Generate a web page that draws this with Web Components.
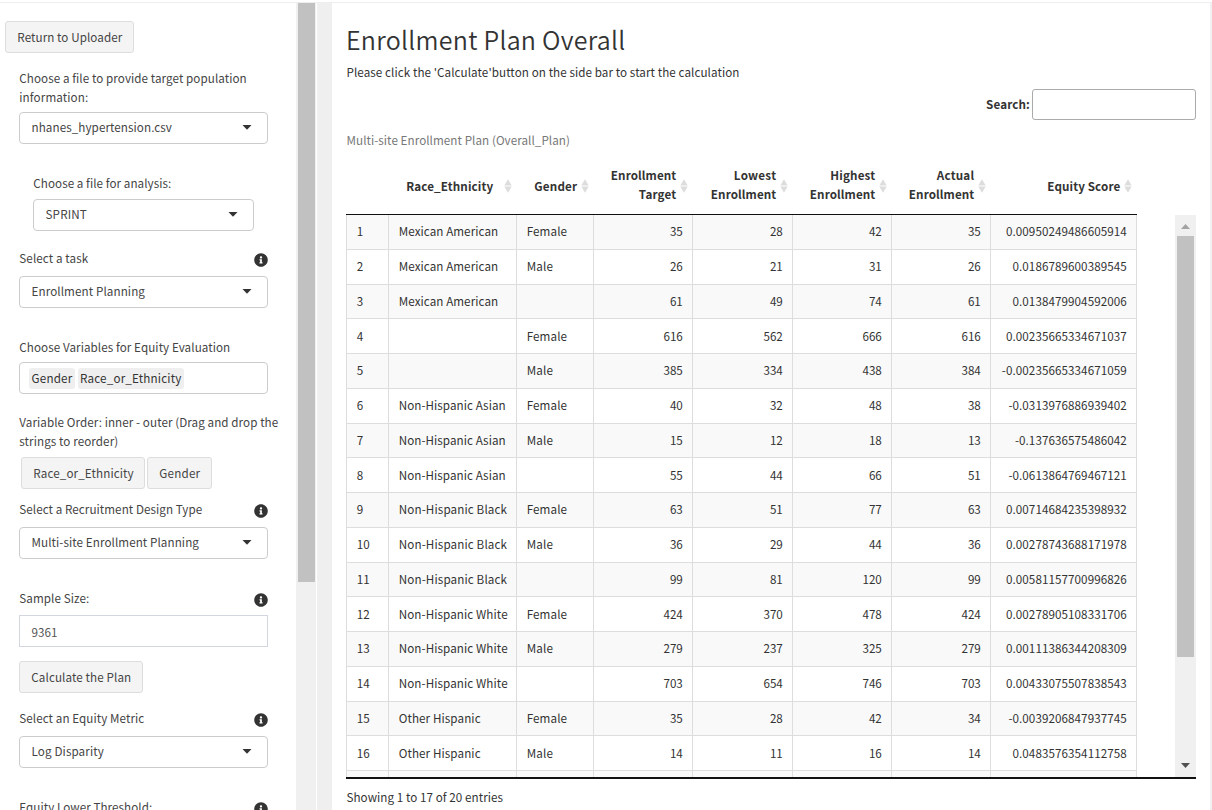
<!DOCTYPE html>
<html lang="en">
<head>
<meta charset="utf-8">
<title>Enrollment Plan</title>
<style>
html,body{margin:0;height:100%;overflow:hidden;background:#fff}
body{font-family:"Noto Sans CJK SC","Open Sans",sans-serif;font-size:11.65px;line-height:19px;color:#333}
</style>
</head>
<body>
<plan-app></plan-app>
<script>
const define = (name, html, setup) => {
  const t = document.createElement('template');
  t.innerHTML = html;
  customElements.define(name, class extends HTMLElement {
    connectedCallback() {
      if (this.shadowRoot) return;
      this.attachShadow({mode: 'open'}).appendChild(t.content.cloneNode(true));
      if (setup) setup(this, this.shadowRoot);
    }
  });
};

// A line of text tracked to occupy the advance width given in "w".
define('tracked-text', `<style>:host{display:inline-block;white-space:pre}</style><slot></slot>`, el => {
  const w = parseFloat(el.getAttribute('w'));
  if (!w) return;
  const natural = el.getBoundingClientRect().width;
  el.style.letterSpacing = ((w - natural) / el.textContent.length) + 'px';
});

define('info-icon', `<style>:host{display:block;width:14px;height:14px}svg{display:block}</style>
<svg width="14" height="14" viewBox="0 0 512 512" fill="#333"><path d="M256 8C119.043 8 8 119.083 8 256c0 136.997 111.043 248 248 248s248-111.003 248-248C504 119.083 392.957 8 256 8zm0 110c23.196 0 42 18.804 42 42s-18.804 42-42 42-42-18.804-42-42 18.804-42 42-42zm56 254c0 6.627-5.373 12-12 12h-88c-6.627 0-12-5.373-12-12v-24c0-6.627 5.373-12 12-12h12v-64h-12c-6.627 0-12-5.373-12-12v-24c0-6.627 5.373-12 12-12h64c6.627 0 12 5.373 12 12v100h12c6.627 0 12 5.373 12 12v24z"/></svg>`);

define('field-label', `<style>:host{display:flex;justify-content:space-between;width:248.500px;height:19px;color:#444;white-space:nowrap}
:host([lines="2"]){height:38px}
.t{display:flex;flex-direction:column;align-items:flex-start;margin-top:-1px;padding-left:.3px}
info-icon{display:none;margin-top:3.700px}:host([info]) info-icon{display:block}</style>
<div class="t"><slot></slot></div><info-icon></info-icon>`);

define('select-box', `<style>:host{display:flex;align-items:center;justify-content:space-between;box-sizing:border-box;width:249px;height:32px;border:1px solid #ccc;border-radius:4px;padding:0 15.500px 1px 11.500px;background:#fff;color:#444}
svg{display:block}::slotted(*){margin-top:-2px}</style><slot></slot><svg width="10" height="5" viewBox="0 0 10 5"><path d="M.5 0h9L5 4.8z" fill="#333"/></svg>`);

define('tag-box', `<style>:host{display:flex;align-items:center;box-sizing:border-box;width:249px;height:32px;border:1px solid #ccc;border-radius:4px;padding:0 9px;color:#333}
div{display:flex;gap:3px}</style><div><slot></slot></div>`);

define('tag-item', `<style>:host{display:block;background:#efefef;border-radius:3px;padding:0 2px 0 2.500px;height:21px;line-height:19px}</style><slot></slot>`);

define('push-button', `<style>:host{display:flex;align-items:center;box-sizing:border-box;width:max-content;height:32px;border:1px solid #ddd;border-radius:3px;background:#f4f4f4;color:#444;padding:0 11px 2px 11.300px}</style><slot></slot>`);

define('number-box', `<style>:host{display:flex;align-items:center;box-sizing:border-box;width:249px;height:32px;border:1px solid #d2d6de;padding:1px 11px 0 11.500px;color:#555}</style><slot></slot>`);

define('side-scroll', `<style>:host{display:block;box-sizing:border-box;width:20px;height:100%;background:#f0f0f0;padding:0 1px 0 2px}
i{display:block;height:579px;background:#c1c1c1}</style><i></i>`);

define('side-bar', `<style>:host{display:flex;width:316px;height:807px;overflow:hidden}
.c{flex:1;min-width:0;display:flex;flex-direction:column;padding:18px 0 0 5px;box-sizing:border-box;overflow:hidden}
.c>*{flex:none}
.g{padding-left:14px}
.r{display:flex;gap:2px;margin:6px 0 0 2px}
</style>
<div class="c">
<push-button style="width:129px"><tracked-text w="105">Return to Uploader</tracked-text></push-button>
<div class="g">
<field-label lines="2" style="margin-top:16px"><tracked-text w="227.5">Choose a file to provide target population</tracked-text><tracked-text w="69">information:</tracked-text></field-label>
<select-box style="margin-top:5px"><tracked-text w="140.5">nhanes_hypertension.csv</tracked-text></select-box>
<field-label style="margin:30px 0 0 14px"><tracked-text w="138">Choose a file for analysis:</tracked-text></field-label>
<select-box style="margin:6px 0 0 14px;width:221px"><tracked-text w="41.5">SPRINT</tracked-text></select-box>
<field-label info style="margin-top:18px"><tracked-text w="69">Select a task</tracked-text></field-label>
<select-box style="margin-top:8px"><tracked-text w="113.5">Enrollment Planning</tracked-text></select-box>
<field-label style="margin-top:30px"><tracked-text w="211">Choose Variables for Equity Evaluation</tracked-text></field-label>
<tag-box style="margin-top:5px"><tag-item><tracked-text w="41">Gender</tracked-text></tag-item><tag-item><tracked-text w="101.5">Race_or_Ethnicity</tracked-text></tag-item></tag-box>
<field-label lines="2" style="margin-top:19px"><tracked-text w="259">Variable Order: inner - outer (Drag and drop the</tracked-text><tracked-text w="99">strings to reorder)</tracked-text></field-label>
<div class="r"><push-button style="width:124px"><tracked-text w="100.5">Race_or_Ethnicity</tracked-text></push-button><push-button style="width:65px"><tracked-text w="41">Gender</tracked-text></push-button></div>
<field-label info style="margin-top:11px"><tracked-text w="183">Select a Recruitment Design Type</tracked-text></field-label>
<select-box style="margin-top:8px"><tracked-text w="167.5">Multi-site Enrollment Planning</tracked-text></select-box>
<field-label info style="margin-top:30px"><tracked-text w="70">Sample Size:</tracked-text></field-label>
<number-box style="margin-top:7px">9361</number-box>
<push-button style="margin-top:14px;width:124px"><tracked-text w="100">Calculate the Plan</tracked-text></push-button>
<field-label info style="margin-top:16px"><tracked-text w="125">Select an Equity Metric</tracked-text></field-label>
<select-box style="margin-top:8px"><tracked-text w="72.5">Log Disparity</tracked-text></select-box>
<field-label info style="margin-top:30px"><tracked-text w="133">Equity Lower Threshold:</tracked-text></field-label>
</div></div>
<side-scroll></side-scroll>`);

define('sort-mark', `<style>:host{display:block;width:8px;height:14px;flex:none}svg{display:block}</style>
<svg width="8" height="14" viewBox="0 0 8 14" fill="#ddd"><path d="M4 .3 7.7 6.4H.3zM4 13.7.3 7.6h7.4z"/></svg>`);

define('table-scroll', `<style>:host{display:flex;flex-direction:column;align-items:center;width:21px;height:562px;background:#f0f0f0}
svg{display:block;margin-top:9px}i{display:block;margin-top:7px;width:17px;height:421px;background:#c1c1c1}svg.d{margin-top:106px}</style>
<svg width="9" height="5" viewBox="0 0 9 5"><path d="M0 5h9L4.5 0z" fill="#a3a3a3"/></svg><i></i><svg class="d" width="9" height="5" viewBox="0 0 9 5"><path d="M0 0h9L4.500 5z" fill="#505050"/></svg>`);

const W = {'Mexican American':99.5,'Non-Hispanic Asian':107,'Non-Hispanic Black':108.5,'Non-Hispanic White':109,'Other Hispanic':82,'Female':40.5,'Male':26.5,
 'Race_Ethnicity':87,'Gender':43,'Enrollment':65.5,'Target':37.5,'Lowest':42.5,'Highest':45,'Actual':37.5,'Equity Score':73};
const M='Mexican American',A='Non-Hispanic Asian',B='Non-Hispanic Black',H='Non-Hispanic White',O='Other Hispanic',F='Female',L='Male';
const ROWS = [
[M,F,35,28,42,35,'0.00950249486605914'],[M,L,26,21,31,26,'0.0186789600389545'],[M,'',61,49,74,61,'0.0138479904592006'],
['',F,616,562,666,616,'0.00235665334671037'],['',L,385,334,438,384,'-0.00235665334671059'],
[A,F,40,32,48,38,'-0.0313976886939402'],[A,L,15,12,18,13,'-0.137636575486042'],[A,'',55,44,66,51,'-0.0613864769467121'],
[B,F,63,51,77,63,'0.00714684235398932'],[B,L,36,29,44,36,'0.00278743688171978'],[B,'',99,81,120,99,'0.00581157700996826'],
[H,F,424,370,478,424,'0.00278905108331706'],[H,L,279,237,325,279,'0.00111386344208309'],[H,'',703,654,746,703,'0.00433075507838543'],
[O,F,35,28,42,34,'-0.0039206847937745'],[O,L,14,11,16,14,'0.0483576354112758'],['','','','','','','']];
const tt = s => s ? `<tracked-text w="${W[s]}">${s}</tracked-text>` : '';

define('data-grid', `<style>
:host{display:block;width:850px}
.row{display:grid;grid-template-columns:43px 128px 77px 99px 100px 99px 99px 146px;width:791px}
.head{height:56px;border-bottom:1px solid #111;font-weight:700;align-items:center}
.h{display:flex;align-items:center;justify-content:flex-end;gap:4px;padding-right:4.700px;padding-bottom:1px}
.h div{display:flex;flex-direction:column;align-items:flex-end;margin-bottom:1px}
.h div.two{margin-bottom:3px}
.h.first{gap:11px}
.view{display:flex;justify-content:space-between;height:562px;overflow:hidden;border-bottom:2px solid #111}
.body .row{height:34.75px}
.body .row:nth-child(odd){background:#f9f9f9}
.row span{box-sizing:border-box;border-right:1px solid #ddd;border-bottom:1px solid #ddd;padding:6.400px 9.200px 0 9.700px;text-align:right;white-space:nowrap}
.row span:nth-child(-n+3){text-align:left}
.row span:last-child{letter-spacing:.07px}
.row span:first-child{border-left:1px solid #ddd}
</style><div class="row head"><b></b></div><div class="view"><div class="body"></div><table-scroll></table-scroll></div>`, (el, root) => {
  const heads = [['Race_Ethnicity'],['Gender'],['Enrollment','Target'],['Lowest','Enrollment'],['Highest','Enrollment'],['Actual','Enrollment'],['Equity Score']];
  root.querySelector('.head').insertAdjacentHTML('beforeend', heads.map((h, i) => `<div class="h${i ? '' : ' first'}"><div${h[1] ? ' class="two"' : ''}>${h.map(tt).join('')}</div><sort-mark></sort-mark></div>`).join(''));
  root.querySelector('.body').innerHTML = ROWS.map((r, i) => `<div class="row"><span>${i < 16 ? i + 1 : ''}</span>${r.map((c, j) => `<span>${j < 2 ? tt(c) : c}</span>`).join('')}</div>`).join('');
});

define('plan-panel', `<style>
:host{display:block;box-sizing:border-box;width:878px;height:807px;padding:0 14px;overflow:hidden;background:#fff}
h1{margin:0;padding-top:17px;font-size:25px;line-height:38px;font-weight:350;height:38px}
.p{margin-top:4px;height:19px;padding-left:.5px}
.s{display:flex;justify-content:flex-end;align-items:center;gap:2px;margin-top:8px;font-weight:700;height:31px}
.s tracked-text{margin-top:-3px}
.s div{box-sizing:border-box;width:164px;height:31px;border:1px solid #aaa;border-radius:3px}
.cap{margin-top:10px;height:19px;color:#777;padding-left:.5px;margin-bottom:9px}
.f{margin-top:8px;height:19px;padding-left:.5px}
</style>
<h1><tracked-text w="279.5">Enrollment Plan Overall</tracked-text></h1>
<div class="p"><tracked-text w="393">Please click the 'Calculate'button on the side bar to start the calculation</tracked-text></div>
<div class="s"><tracked-text w="44">Search:</tracked-text><div></div></div>
<div class="cap"><tracked-text w="223.5">Multi-site Enrollment Plan (Overall_Plan)</tracked-text></div>
<data-grid></data-grid>
<div class="f"><tracked-text w="156.5">Showing 1 to 17 of 20 entries</tracked-text></div>`);

define('plan-app', `<style>
:host{display:flex;box-sizing:border-box;width:1212px;height:810px;padding-top:2px;overflow:hidden}
.w{display:flex;width:1212px;height:808px;box-sizing:border-box;border-top:1px solid #eee}
.gap{width:14px;margin-left:2px;background:#efefef;box-shadow:-1px 0 #f0f0f0}.edge{width:2px;background:#f0f0f0}
</style><div class="w"><side-bar></side-bar><div class="gap"></div><plan-panel></plan-panel><div class="edge"></div></div>`);
</script>
</body>
</html>
